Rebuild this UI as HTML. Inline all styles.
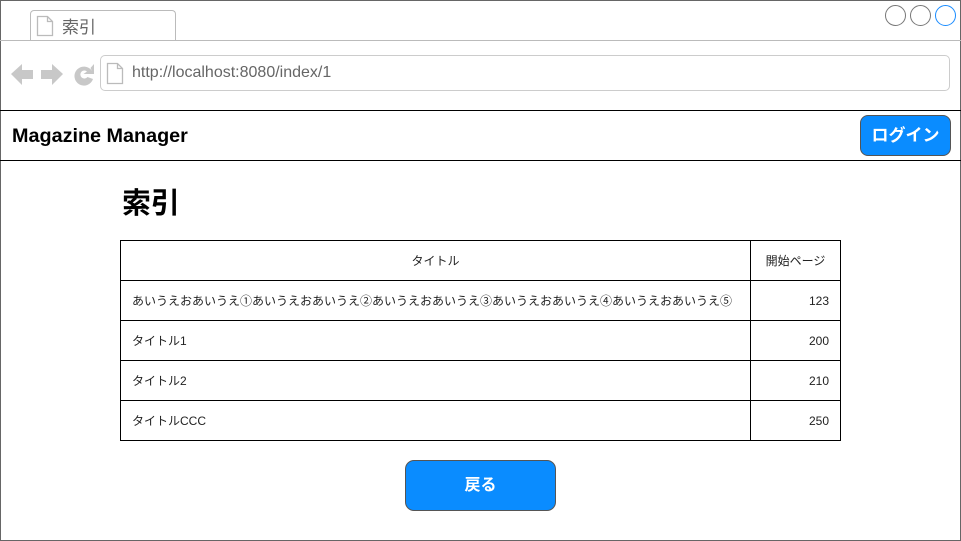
<!DOCTYPE html>
<html><head><meta charset="utf-8"><style>
*{margin:0;padding:0;box-sizing:border-box}
body{width:961px;height:541px;position:relative;background:#fff;font-family:"Liberation Sans","Noto Sans CJK JP",sans-serif;overflow:hidden}
.a{position:absolute}
.frame{left:0;top:0;width:961px;height:541px;border:1px solid #666}
.tab{left:30px;top:10px;width:146px;height:31px;border:1px solid #bbb;border-bottom:none;border-radius:4px 4px 0 0;background:#fff}
.tabline{left:0;top:40px;width:961px;height:1px;background:#bbb}
.url{left:100px;top:55px;width:850px;height:36px;border:1px solid #ccc;border-radius:5px}
.c{width:21px;height:21px;border-radius:50%;border:1.3px solid #777;top:5px}
table{position:absolute;left:120px;top:240px;border-collapse:collapse;font-size:12px;color:#222}
td{border:1px solid #000;height:40px;padding:0 11px}
</style></head><body>
<div class="a frame"></div>
<div class="a tab"></div>
<div class="a tabline"></div>
<svg class="a" style="left:36px;top:15px" width="18" height="22"><path d="M1.5 1.5h10l5 5v14h-15z M11.5 1.5v5h5" fill="#fff" stroke="#bbb" stroke-width="1.3"/></svg>
<div class="a" style="left:62px;top:13px;font-size:17px;color:#666">索引</div>
<div class="a c" style="left:885px"></div>
<div class="a c" style="left:910px"></div>
<div class="a c" style="left:935px;border-color:#1a8cff"></div>
<svg class="a" style="left:10px;top:62px" width="88" height="26" fill="#c8c8c8">
<path d="M1 12 L12 2 V8 H23 V17 H12 V23Z"/>
<path d="M53 12 L42 2 V8 H31 V17 H42 V23Z"/>
<path d="M82 9 A9.5 9.5 0 1 0 83 17 L77.5 15 A4 4 0 1 1 77 9.5 L73.5 12 H84 V2 L80.5 6Z"/>
</svg>
<div class="a url"></div>
<svg class="a" style="left:106px;top:62px" width="18" height="23"><path d="M1.5 1.5h10l5 5v15h-15z M11.5 1.5v5h5" fill="#fff" stroke="#bbb" stroke-width="1.3"/></svg>
<div class="a" style="left:132px;top:64px;font-size:16px;color:#666">http://localhost:8080/index/1</div>
<div class="a" style="left:0;top:110px;width:961px;height:51px;border-top:1px solid #000;border-bottom:1px solid #000"></div>
<div class="a" style="left:12px;top:125px;font-size:19.8px;font-weight:bold;color:#000">Magazine Manager</div>
<div class="a" style="left:860px;top:115px;width:91px;height:41px;background:#0a8cff;border:1px solid #555;border-radius:8px;color:#fff;font-weight:bold;font-size:17px;text-align:center;line-height:39px">ログイン</div>
<div class="a" style="left:122px;top:180px;font-size:29px;font-weight:bold;color:#000">索引</div>
<table>
<tr><td style="width:630px;text-align:center">タイトル</td><td style="width:90px;text-align:center;padding:0">開始ページ</td></tr>
<tr><td>あいうえおあいうえ①あいうえおあいうえ②あいうえおあいうえ③あいうえおあいうえ④あいうえおあいうえ⑤</td><td style="text-align:right">123</td></tr>
<tr><td>タイトル1</td><td style="text-align:right">200</td></tr>
<tr><td>タイトル2</td><td style="text-align:right">210</td></tr>
<tr><td>タイトルCCC</td><td style="text-align:right">250</td></tr>
</table>
<div class="a" style="left:405px;top:460px;width:151px;height:51px;background:#0a8cff;border:1px solid #555;border-radius:9px;color:#fff;font-weight:bold;font-size:16px;text-align:center;line-height:49px">戻る</div>
</body></html>
